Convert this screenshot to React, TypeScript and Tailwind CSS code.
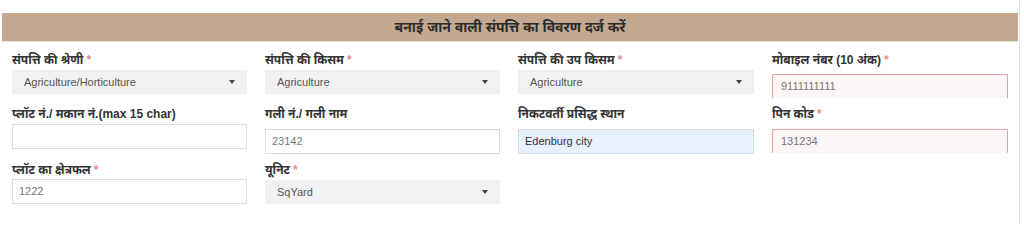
type Field = {
  label: string;
  required?: boolean;
  kind: "select" | "input" | "error" | "filled";
  value: string;
  mt: string;
};

function Caret() {
  return <span className="w-0 h-0 border-l-[3px] border-r-[3px] border-t-[4px] border-l-transparent border-r-transparent border-t-[#444]" />;
}

function FieldBox({ f }: { f: Field }) {
  if (f.kind === "select") {
    return (
      <div className={`${f.mt} h-[24px] bg-[#f1f1f1] flex items-center justify-between pl-[12px] pr-[12px] text-[11px] text-[#555]`}>
        <span>{f.value}</span>
        <Caret />
      </div>
    );
  }
  if (f.kind === "error") {
    return (
      <div className={`${f.mt} h-[24px] bg-[#fdf6f6] border-t border-r border-l border-[#f2a2a6] flex items-center pl-[8px] text-[11px] text-[#777]`}>
        {f.value}
      </div>
    );
  }
  if (f.kind === "filled") {
    return (
      <div className={`${f.mt} h-[25px] bg-[#e7f0fd] border border-[#d6dde8] flex items-center pl-[6px] text-[11px] text-[#333]`}>
        {f.value}
      </div>
    );
  }
  return (
    <div className={`${f.mt} h-[25px] bg-white border border-[#dcdcdc] flex items-center pl-[6px] text-[11px] text-[#777]`}>
      {f.value}
    </div>
  );
}

export default function App() {
  const fields: Field[] = [
    { label: "संपत्ति की श्रेणी", required: true, kind: "select", value: "Agriculture/Horticulture", mt: "mt-[2px]" },
    { label: "संपत्ति की किसम", required: true, kind: "select", value: "Agriculture", mt: "mt-[2px]" },
    { label: "संपत्ति की उप किसम", required: true, kind: "select", value: "Agriculture", mt: "mt-[2px]" },
    { label: "मोबाइल नंबर (10 अंक)", required: true, kind: "error", value: "9111111111", mt: "mt-[6px]" },
    { label: "प्लॉट नं./ मकान नं.(max 15 char)", kind: "input", value: "", mt: "mt-[2px]" },
    { label: "गली नं./ गली नाम", kind: "input", value: "23142", mt: "mt-[7px]" },
    { label: "निकटवर्ती प्रसिद्ध स्थान", kind: "filled", value: "Edenburg city", mt: "mt-[7px]" },
    { label: "पिन कोड", required: true, kind: "error", value: "131234", mt: "mt-[7px]" },
    { label: "प्लॉट का क्षेत्रफल", required: true, kind: "input", value: "1222", mt: "mt-[1px]" },
    { label: "यूनिट", required: true, kind: "select", value: "SqYard", mt: "mt-[2px]" },
  ];

  return (
    <div className="w-[1024px] h-[224px] bg-white font-['Liberation_Sans','Noto_Sans',sans-serif] overflow-hidden">
      <div className="w-[1020px] h-full border-r border-[#e4e4e4] pt-[13px]">
        <div className="ml-[2px] w-[1016px] h-[29px] bg-[#c4a890] border-b border-[#eadfd4] flex items-center justify-center text-[14px] font-bold text-[#2b2b2b]">
          बनाई जाने वाली संपत्ति का विवरण दर्ज करें
        </div>
        <div className="grid grid-cols-[235px_235px_236px_236px] gap-x-[18px] gap-y-[9px] pl-[12px] pt-[11px]">
          {fields.map((f, i) => (
            <div key={i}>
              <div className="text-[12px] leading-[15px] font-bold text-[#333]">
                {f.label}
                {f.required && <span className="text-[#e88] ml-[3px]">*</span>}
              </div>
              <FieldBox f={f} />
            </div>
          ))}
        </div>
      </div>
    </div>
  );
}
